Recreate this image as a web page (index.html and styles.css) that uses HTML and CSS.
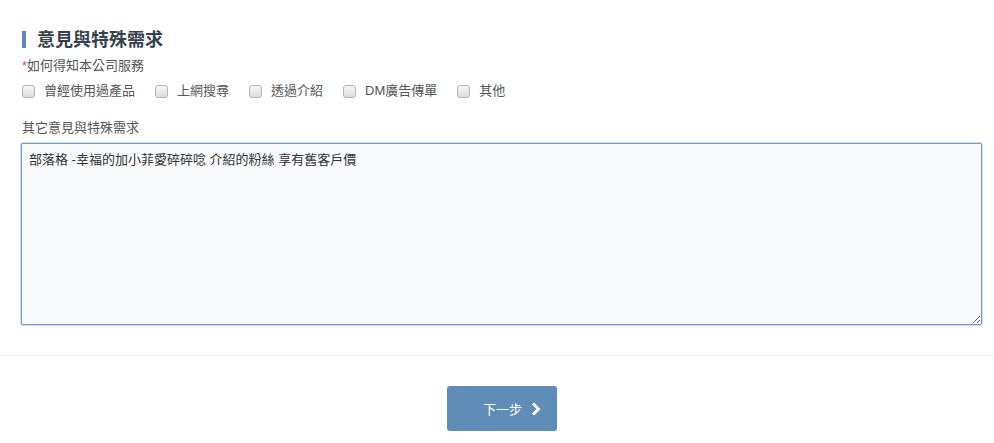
FILE: index.html
```html
<!DOCTYPE html>
<html lang="zh-Hant">
<head>
    <meta charset="UTF-8">
    <meta name="viewport" content="width=device-width, initial-scale=1.0">
    <title>意見與特殊需求</title>
    <link rel="stylesheet" href="styles.css">
</head>
<body>
    <main class="form-section">
        <h2 class="section-title">意見與特殊需求</h2>

        <p class="field-label"><span class="required">*</span>如何得知本公司服務</p>
        <div class="check-row">
            <label class="check-item"><input type="checkbox">曾經使用過產品</label>
            <label class="check-item"><input type="checkbox">上網搜尋</label>
            <label class="check-item"><input type="checkbox">透過介紹</label>
            <label class="check-item"><input type="checkbox">DM廣告傳單</label>
            <label class="check-item"><input type="checkbox">其他</label>
        </div>

        <p class="field-label field-label--spaced">其它意見與特殊需求</p>
        <textarea class="note-box">部落格 -幸福的加小菲愛碎碎唸 介紹的粉絲 享有舊客戶價</textarea>
    </main>

    <hr class="divider">

    <!-- Next step -->
    <div class="actions">
        <button class="next-button" type="button">
            下一步
            <svg class="next-icon" viewBox="0 0 10 14" width="10" height="14" aria-hidden="true">
                <polyline points="2,1.5 7.5,7 2,12.5" fill="none" stroke="#ffffff" stroke-width="2.8" stroke-linejoin="miter"/>
            </svg>
        </button>
    </div>
</body>
</html>
```

FILE: styles.css
```css
/* Global Styles */
body {
    margin: 0;
    padding: 0;
    background-color: #ffffff;
    color: #555555;
    font-family: "Liberation Sans", "Noto Sans CJK TC", sans-serif;
    font-size: 13px;
}

/* Form Section */
.form-section {
    padding: 29px 12px 0 21px;
}

.section-title {
    margin: 2px 0 0 1px;
    padding-left: 11px;
    border-left: 4px solid #5b88b4;
    height: 17px;
    font-size: 18px;
    line-height: 18px;
    font-weight: bold;
    color: #36414c;
}

.field-label {
    margin: 9px 0 0 1px;
    line-height: 18px;
    color: #555555;
}

.field-label--spaced {
    margin-top: 18px;
}

.required {
    color: #d9534f;
}

/* Checkboxes */
.check-row {
    display: flex;
    align-items: center;
    gap: 20px;
    margin: 6px 0 0 1px;
    height: 20px;
}

.check-item {
    display: flex;
    align-items: center;
    gap: 9px;
    line-height: 20px;
    color: #555555;
}

.check-item input {
    appearance: none;
    -webkit-appearance: none;
    width: 13px;
    height: 13px;
    margin: 0;
    border: 1px solid #b5b5b5;
    border-radius: 3px;
    background: linear-gradient(#f7f7f7, #dcdcdc);
    box-sizing: border-box;
}

/* Textarea */
.note-box {
    display: block;
    width: 100%;
    height: 182px;
    margin-top: 6px;
    padding: 7px 7px;
    box-sizing: border-box;
    border: 1px solid #6d9ed6;
    box-shadow: 0 0 0 1px rgba(109, 158, 214, 0.35);
    border-radius: 2px;
    background-color: #f7f9fb;
    color: #333333;
    font-family: "Liberation Sans", "Noto Sans CJK TC", sans-serif;
    font-size: 13px;
    line-height: 18px;
    outline: none;
}

.divider {
    margin: 30px 0 0;
    border: none;
    border-top: 1px solid #e8e8e8;
}

/* Actions */
.actions {
    display: flex;
    justify-content: center;
    padding: 30px 0 0 10px;
}

.next-button {
    display: flex;
    align-items: center;
    gap: 9px;
    width: 110px;
    height: 45px;
    padding: 0 0 0 36px;
    border: none;
    border-radius: 3px;
    background-color: #5f8db7;
    color: #ffffff;
    font-family: "Liberation Sans", "Noto Sans CJK TC", sans-serif;
    font-size: 13px;
    cursor: pointer;
}

.next-icon {
    display: block;
}
```
